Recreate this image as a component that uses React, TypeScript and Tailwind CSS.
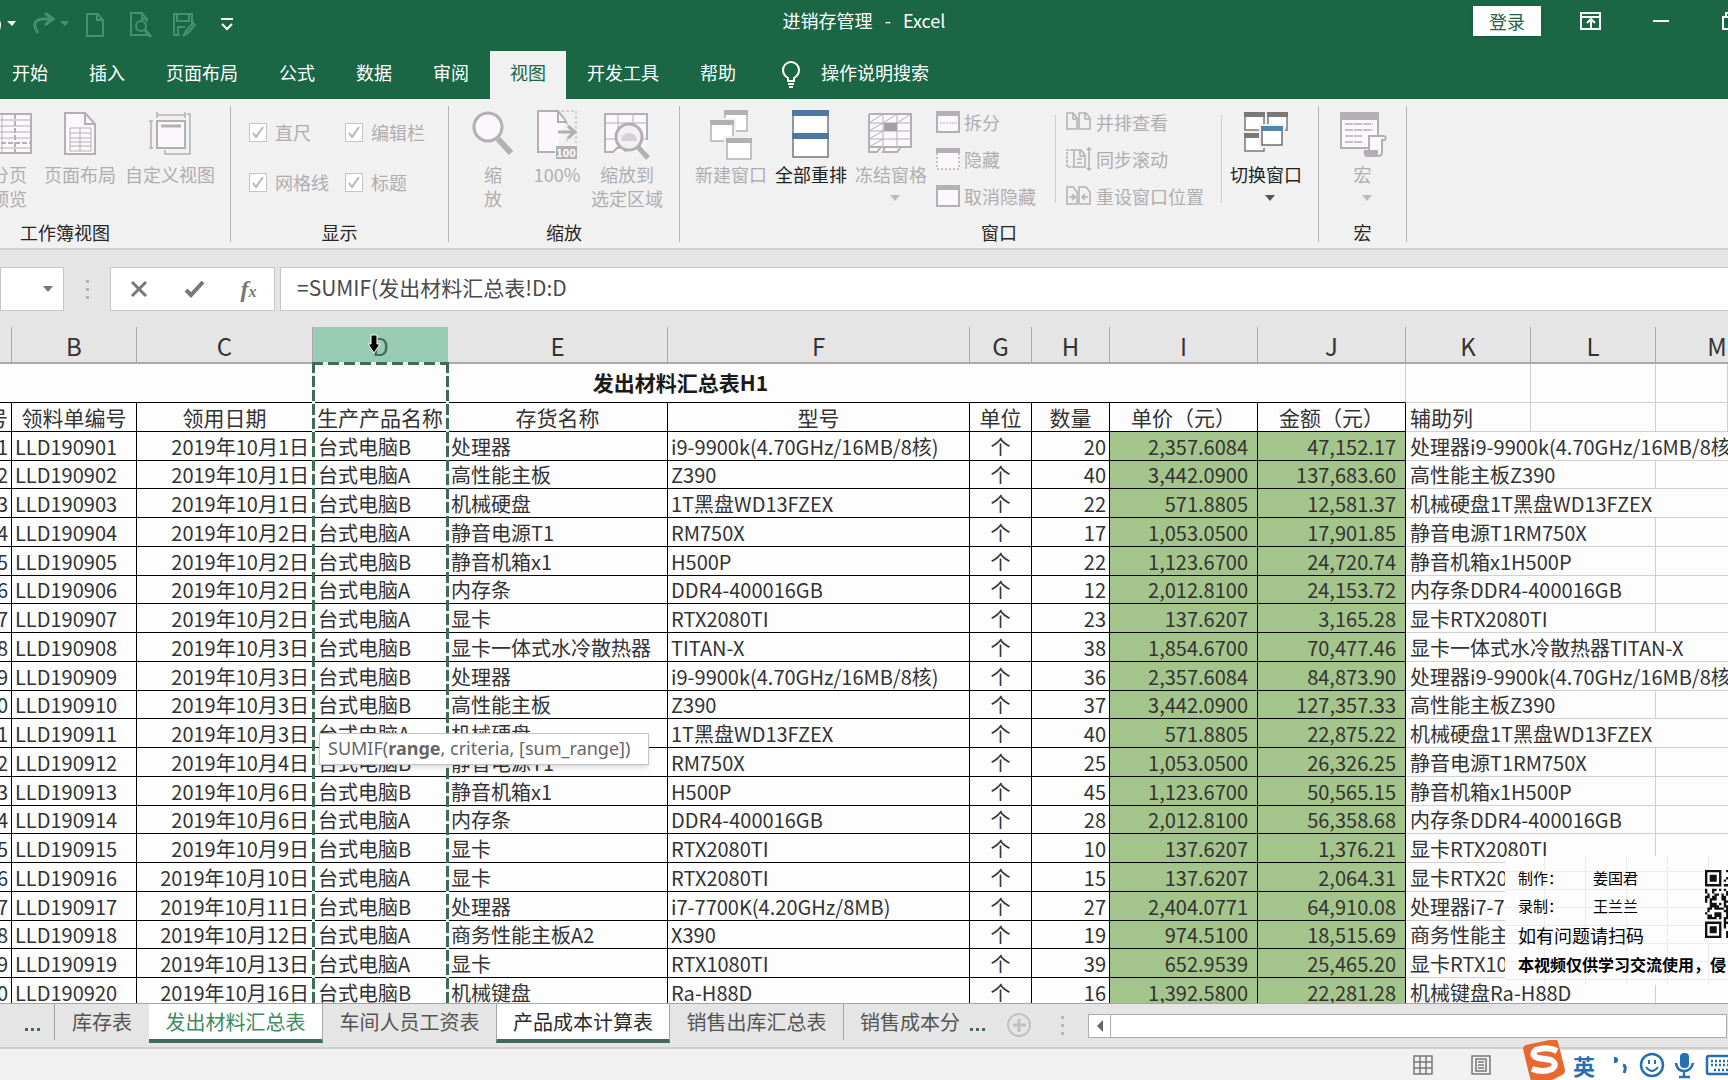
import type { ReactNode } from "react";

const TABS = ["开始", "插入", "页面布局", "公式", "数据", "审阅", "视图", "开发工具", "帮助"];

const COLUMNS = ["A", "B", "C", "D", "E", "F", "G", "H", "I", "J", "K", "L", "M"];

// date, product, item, model, quantity, unit price, amount
const ROWS: [string, string, string, string, string, string, string][] = [
  ["2019年10月1日", "台式电脑B", "处理器", "i9-9900k(4.70GHz/16MB/8核)", "20", "2,357.6084", "47,152.17"],
  ["2019年10月1日", "台式电脑A", "高性能主板", "Z390", "40", "3,442.0900", "137,683.60"],
  ["2019年10月1日", "台式电脑B", "机械硬盘", "1T黑盘WD13FZEX", "22", "571.8805", "12,581.37"],
  ["2019年10月2日", "台式电脑A", "静音电源T1", "RM750X", "17", "1,053.0500", "17,901.85"],
  ["2019年10月2日", "台式电脑B", "静音机箱x1", "H500P", "22", "1,123.6700", "24,720.74"],
  ["2019年10月2日", "台式电脑A", "内存条", "DDR4-400016GB", "12", "2,012.8100", "24,153.72"],
  ["2019年10月2日", "台式电脑A", "显卡", "RTX2080TI", "23", "137.6207", "3,165.28"],
  ["2019年10月3日", "台式电脑B", "显卡一体式水冷散热器", "TITAN-X", "38", "1,854.6700", "70,477.46"],
  ["2019年10月3日", "台式电脑B", "处理器", "i9-9900k(4.70GHz/16MB/8核)", "36", "2,357.6084", "84,873.90"],
  ["2019年10月3日", "台式电脑B", "高性能主板", "Z390", "37", "3,442.0900", "127,357.33"],
  ["2019年10月3日", "台式电脑A", "机械硬盘", "1T黑盘WD13FZEX", "40", "571.8805", "22,875.22"],
  ["2019年10月4日", "台式电脑B", "静音电源T1", "RM750X", "25", "1,053.0500", "26,326.25"],
  ["2019年10月6日", "台式电脑B", "静音机箱x1", "H500P", "45", "1,123.6700", "50,565.15"],
  ["2019年10月6日", "台式电脑A", "内存条", "DDR4-400016GB", "28", "2,012.8100", "56,358.68"],
  ["2019年10月9日", "台式电脑B", "显卡", "RTX2080TI", "10", "137.6207", "1,376.21"],
  ["2019年10月10日", "台式电脑A", "显卡", "RTX2080TI", "15", "137.6207", "2,064.31"],
  ["2019年10月11日", "台式电脑B", "处理器", "i7-7700K(4.20GHz/8MB)", "27", "2,404.0771", "64,910.08"],
  ["2019年10月12日", "台式电脑A", "商务性能主板A2", "X390", "19", "974.5100", "18,515.69"],
  ["2019年10月13日", "台式电脑A", "显卡", "RTX1080TI", "39", "652.9539", "25,465.20"],
  ["2019年10月16日", "台式电脑B", "机械键盘", "Ra-H88D", "16", "1,392.5800", "22,281.28"],
];

const CELL = "border-r border-b border-black px-[3px]";
const SOFT = "border-r border-b border-[#d0d0d0]";

/* ---------- ribbon icons ---------- */

function Svg({ w, h, children, className }: { w: number; h: number; children: ReactNode; className?: string }) {
  return (
    <svg width={w} height={h} viewBox={`0 0 ${w} ${h}`} fill="none" stroke="#b3b0b3" strokeWidth="2" className={className} aria-hidden="true">
      {children}
    </svg>
  );
}

const PageBreakIcon = () => (
  <Svg w={46} h={46}>
    <path d="M1 4h44v39H1z" fill="#fbf7fb" />
    <path d="M1 10h44M1 16h44M1 22h44M1 28h44M1 38h44M16 4v39" strokeWidth="1" />
    <path d="M1 33h44M29 4v39" strokeDasharray="5 2" />
  </Svg>
);

const PageLayoutIcon = () => (
  <Svg w={32} h={46}>
    <path d="M1 3h20l10 11v30H1z" fill="#fbf7fb" />
    <path d="M21 3v11h10" />
    <path d="M6 18h21v23H6zM6 23h21M6 28h21M6 32h21M6 36h21M16 18v23" strokeWidth="1" />
  </Svg>
);

const CustomViewIcon = () => (
  <Svg w={42} h={46}>
    <path d="M8 11h28v27H8z" fill="#fbf7fb" />
    <path d="M12 16h20" strokeWidth="3" />
    <path d="M8 5h28M8 2v6M36 2v6M2 11v27M0 11h4M0 38h4M38 4h3v40H16v-4" strokeWidth="1.5" />
  </Svg>
);

const ZoomIcon = () => (
  <Svg w={42} h={46}>
    <circle cx="16" cy="17" r="14" fill="#fbf7fb" strokeWidth="3" />
    <path d="M26 29l13 14" strokeWidth="6" />
  </Svg>
);

const HundredIcon = () => (
  <Svg w={40} h={50}>
    <path d="M18 42H1V1h20l8 10" fill="#fbf7fb" />
    <path d="M21 1v11h9" />
    <path d="M24 1h15v32M30 12v4M30 28v5" strokeDasharray="3 2" strokeWidth="1" />
    <path d="M21 22h15M31 16l7 6-7 6" strokeWidth="3" />
    <path d="M19 36h21v13H19z" fill="#b3b0b3" stroke="none" />
    <text x="29" y="47" textAnchor="middle" fontSize="11" fontWeight="bold" fill="#fff" stroke="none">100</text>
  </Svg>
);

const ZoomSelectionIcon = () => (
  <Svg w={46} h={50}>
    <path d="M1 4h42v38H1z" fill="#fbf7fb" stroke="none" />
    <path d="M43 30V4H1v38h8l4-4h6l3 4" />
    <path d="M1 13h42M1 29h42M14 4v34M29 4v10" strokeWidth="1" />
    <circle cx="25" cy="27" r="13" fill="#f3f0f3" strokeWidth="3" />
    <path d="M17 31a8 8 0 0 1 16 0z" fill="#d5d2d5" stroke="none" />
    <path d="M34 37l10 11" strokeWidth="5" />
  </Svg>
);

function MiniWindow({ x, y, w = 24, h = 20, head = "#b3b0b3", line = "#b3b0b3" }: { x: number; y: number; w?: number; h?: number; head?: string; line?: string }) {
  return (
    <g>
      <rect x={x - 2} y={y - 2} width={w + 4} height={h + 4} fill="#f1f1f1" stroke="none" />
      <rect x={x + 1} y={y + 1} width={w - 2} height={h - 2} fill="#fff" stroke={line} strokeWidth="1.5" />
      <rect x={x} y={y} width={w} height="5" fill={head} stroke="none" />
    </g>
  );
}

const NewWindowIcon = () => (
  <Svg w={42} h={50}>
    <MiniWindow x={14} y={0} h={22} />
    <MiniWindow x={0} y={10} h={22} />
    <MiniWindow x={16} y={28} w={26} h={22} />
  </Svg>
);

const ArrangeAllIcon = () => (
  <Svg w={38} h={48}>
    <path d="M1 1h35v46H1z" fill="#fff" stroke="#77777a" strokeWidth="1.5" />
    <path d="M0 0h37v6H0zM0 23h37v6H0z" fill="#4f79a2" stroke="none" />
  </Svg>
);

const FreezeIcon = () => (
  <Svg w={46} h={46}>
    <path d="M1 4h42v33H29v5H1z" fill="#fbf7fb" stroke="none" />
    <path d="M1 4h42v33H1M1 4v38h8l4-5M17 37l-2 5h14l4-5" />
    <path d="M1 13h42M1 21h42M1 29h42M15 4v33M29 4v33M1 13l14-9M15 13l14-9M29 13l14-9M1 21l14-8M1 29l14-8M1 37l14-8" strokeWidth="1" />
    <path d="M16 13h13v8H16z" fill="#a3a0a3" stroke="none" />
  </Svg>
);

const SwitchWindowIcon = () => (
  <Svg w={44} h={46}>
    <MiniWindow x={0} y={2} w={21} h={19} head="#7a787a" line="#7a787a" />
    <MiniWindow x={23} y={2} w={21} h={19} head="#7a787a" line="#7a787a" />
    <MiniWindow x={0} y={23} w={21} h={19} head="#7a787a" line="#7a787a" />
    <MiniWindow x={17} y={16} w={22} h={20} head="#4f86ad" line="#6c6c70" />
  </Svg>
);

const MacroIcon = () => (
  <Svg w={48} h={48}>
    <path d="M2 3h37v35H2z" fill="#fbf7fb" />
    <path d="M1 2h39v8H1z" fill="#b3b0b3" stroke="none" />
    <path d="M6 14h28M6 20h28M6 26h18M6 32h18" strokeWidth="1.5" strokeDasharray="8 1" />
    <path d="M30 26h15q3 1 1 4h-3v12q0 4-4 4H28q-3-1-2-5h4z" fill="#fbf7fb" />
    <path d="M26 41h12v5H28q-3-1-2-5z" fill="#b3b0b3" />
  </Svg>
);

const SplitIcon = () => (
  <Svg w={24} h={24}>
    <path d="M1 2h22v20H1z" fill="#fbf7fb" />
    <path d="M0 1h24v5H0z" fill="#b3b0b3" stroke="none" />
    <path d="M4 13h17" strokeDasharray="2 1" strokeWidth="1" />
  </Svg>
);

const HideIcon = () => (
  <Svg w={24} h={24}>
    <path d="M1 6v16h22V6" strokeDasharray="2 2" strokeWidth="1.5" fill="#fbf7fb" />
    <path d="M0 1h24v5H0z" fill="#b3b0b3" stroke="none" />
  </Svg>
);

const UnhideIcon = () => (
  <Svg w={24} h={24}>
    <path d="M1 2h22v20H1z" fill="#fbf7fb" />
    <path d="M0 1h24v5H0z" fill="#b3b0b3" stroke="none" />
  </Svg>
);

const SideBySideIcon = () => (
  <Svg w={26} h={24}>
    <path d="M1 3h6l4 5v11H1zM13 3h7l4 5v11H13z" strokeWidth="1.5" />
    <path d="M7 3v6h4M19 3v6h5" strokeWidth="1.5" />
  </Svg>
);

const SyncScrollIcon = () => (
  <Svg w={26} h={24}>
    <path d="M7 3H1v17h6" strokeDasharray="3 1" strokeWidth="1.5" />
    <path d="M8 3h7l4 5v12H8zM14 3v6h5M11 12h5M11 16h5" strokeWidth="1.5" />
    <path d="M23 1v22M21 3l2-2 2 2M21 21l2 2 2-2" strokeWidth="1.5" />
  </Svg>
);

const ResetPositionIcon = () => (
  <Svg w={26} h={24}>
    <path d="M1 3h6l4 5v12H1zM13 3h7l4 5v12H13z" strokeWidth="1.5" />
    <path d="M3 13h6M6 10l3 3-3 3M22 13h-6M19 10l-3 3 3 3" strokeWidth="1.5" />
  </Svg>
);

const Caret = ({ className = "text-[#b0b0b0]" }: { className?: string }) => (
  <svg width="10" height="6" viewBox="0 0 10 6" fill="currentColor" className={className} aria-hidden="true">
    <path d="M0 0h10L5 6z" />
  </svg>
);

/* ---------- ribbon parts ---------- */

function RibbonGroup({ title, className, titleClass = "", children }: { title: string; className: string; titleClass?: string; children: ReactNode }) {
  return (
    <section className={`flex shrink-0 flex-col justify-between border-r border-[#b5b5b5] ${className}`}>
      <div className="flex items-start">{children}</div>
      <h2 className={`text-center leading-5 text-[#262626] ${titleClass}`}>{title}</h2>
    </section>
  );
}

function BigButton({ icon, lines, className, active, caret }: { icon: ReactNode; lines: string[]; className: string; active?: boolean; caret?: boolean }) {
  return (
    <button className={`flex shrink-0 flex-col items-center whitespace-nowrap pt-1 leading-6 ${active ? "text-[#1f1f1f]" : "text-[#b0adb0]"} ${className}`}>
      <span className="flex h-[52px] items-start justify-center">{icon}</span>
      {lines.map((line) => (
        <span key={line}>{line}</span>
      ))}
      {caret && <Caret className={active ? "mt-[9px] ml-2 text-[#555]" : "mt-[9px] ml-2 text-[#bdbabd]"} />}
    </button>
  );
}

function SmallButton({ icon, label }: { icon: ReactNode; label: string }) {
  return (
    <button className="flex h-8 items-center gap-1 whitespace-nowrap text-[#b0adb0]">
      {icon}
      {label}
    </button>
  );
}

function RibbonCheck({ label }: { label: string }) {
  return (
    <label className="relative flex h-[50px] items-center gap-2 whitespace-nowrap text-[#b0adb0]">
      <input type="checkbox" defaultChecked disabled className="h-[19px] w-[18px] appearance-none border border-[#c4c4c4] bg-white" />
      <svg width="18" height="19" viewBox="0 0 18 19" fill="none" stroke="#b8b8b8" strokeWidth="2" className="absolute left-0" aria-hidden="true">
        <path d="M4 10l3 4 7-10" />
      </svg>
      {label}
    </label>
  );
}

const Divider = () => <div className="mt-[9px] h-[88px] w-px bg-[#cfcfcf]" />;

/* ---------- page sections ---------- */

function TitleBar() {
  return (
    <header className="relative flex h-[42px] shrink-0 items-center justify-between overflow-hidden text-white">
      <div className="flex items-center text-[#45936c]">
        <svg width="240" height="40" viewBox="0 0 240 40" fill="none" stroke="currentColor" strokeWidth="2" aria-label="快速访问工具栏">
          <path d="M-4 18q6 2 3 11" stroke="#fff" />
          <path d="M7 20h9l-4 5z" fill="#fff" stroke="none" />
          <path d="M38 32q-8-12 4-14h9M45 12l8 6-8 6" strokeWidth="3" />
          <path d="M60 20h9l-4 5z" fill="currentColor" stroke="none" />
          <path d="M87 13h11l5 6v16H87zM97 13v6h6" />
          <path d="M148 34h-17V12h11l5 6v3M142 12v6h5" />
          <circle cx="141" cy="25" r="5" />
          <path d="M145 29l6 7" strokeWidth="3" />
          <path d="M192 22v-9h-18v21h6M177 13v7h12v-7M178 34v-8h7" />
          <path d="M183 35l3-5 7-8 2 2-7 8z" />
          <path d="M221 18h12M222 23l5 5 5-5" stroke="#fff" />
        </svg>
      </div>
      <h1 className="absolute inset-x-0 top-[6px] text-center leading-7 whitespace-pre">进销存管理   -   Excel</h1>
      <div className="flex items-center">
        <button className="h-[30px] w-[68px] bg-white leading-7 text-[#1b6644] shadow-sm">登录</button>
        <button aria-label="功能区显示选项" className="ml-[38px]">
          <svg width="24" height="24" viewBox="0 0 24 24" fill="none" stroke="#fff" strokeWidth="2">
            <path d="M2 4h19v16H2zM2 8h19M12 19v-8M8 14l4-4 4 4" />
          </svg>
        </button>
        <button aria-label="最小化" className="ml-[50px] h-6">
          <span className="block h-[2px] w-4 bg-white" />
        </button>
        <button aria-label="还原" className="ml-[53px]">
          <svg width="6" height="24" viewBox="0 0 6 24" fill="none" stroke="#fff" strokeWidth="2">
            <path d="M6 8H1v12h5M4 8V4h2" />
          </svg>
        </button>
      </div>
    </header>
  );
}

function RibbonTabs() {
  return (
    <nav className="flex h-[57px] shrink-0 items-end text-white">
      <div className="-ml-2 flex gap-px">
        {TABS.map((tab) => (
          <button
            key={tab}
            className={
              tab === "视图"
                ? "h-12 bg-[#f1f1f1] px-5 pb-[6px] whitespace-nowrap text-[#1b6644]"
                : "h-12 px-5 pb-[6px] whitespace-nowrap"
            }
          >
            {tab}
          </button>
        ))}
      </div>
      <button className="ml-[25px] flex h-12 items-center gap-[20px] whitespace-nowrap">
        <svg width="20" height="28" viewBox="0 0 20 28" fill="none" stroke="#fff" strokeWidth="2" aria-hidden="true">
          <path d="M7 20v-3q-5-3-5-8a8 8 0 0 1 16 0q0 5-5 8v3zM7 23h6M8 26h4" />
        </svg>
        <span className="pb-[6px]">操作说明搜索</span>
      </button>
    </nav>
  );
}

function Ribbon() {
  return (
    <div className="flex h-[151px] shrink-0 overflow-hidden border-b-2 border-[#d2d2d2] bg-[#f1f1f1] pt-[7px] pb-[6px]">
      <RibbonGroup title="工作簿视图" className="w-[231px]" titleClass="w-[130px]">
        <BigButton icon={<PageBreakIcon />} lines={["分页", "预览"]} className="-ml-[14px] w-[46px]" />
        <BigButton icon={<PageLayoutIcon />} lines={["页面布局"]} className="ml-2 w-20" />
        <BigButton icon={<CustomViewIcon />} lines={["自定义视图"]} className="w-[100px]" />
      </RibbonGroup>
      <RibbonGroup title="显示" className="w-[218px]">
        <div className="grid grid-cols-[96px_auto] pt-px pl-[18px]">
          <RibbonCheck label="直尺" />
          <RibbonCheck label="编辑栏" />
          <RibbonCheck label="网格线" />
          <RibbonCheck label="标题" />
        </div>
      </RibbonGroup>
      <RibbonGroup title="缩放" className="w-[231px]">
        <BigButton icon={<ZoomIcon />} lines={["缩", "放"]} className="ml-3 w-16" />
        <BigButton icon={<HundredIcon />} lines={["100%"]} className="w-16" />
        <BigButton icon={<ZoomSelectionIcon />} lines={["缩放到", "选定区域"]} className="w-[76px]" />
      </RibbonGroup>
      <RibbonGroup title="窗口" className="w-[639px]">
        <BigButton icon={<NewWindowIcon />} lines={["新建窗口"]} className="ml-[11px] w-20" />
        <BigButton icon={<ArrangeAllIcon />} lines={["全部重排"]} className="w-20" active />
        <BigButton icon={<FreezeIcon />} lines={["冻结窗格"]} className="w-20" caret />
        <div className="flex w-[124px] flex-col gap-[5px] pl-[5px]">
          <SmallButton icon={<SplitIcon />} label="拆分" />
          <SmallButton icon={<HideIcon />} label="隐藏" />
          <SmallButton icon={<UnhideIcon />} label="取消隐藏" />
        </div>
        <Divider />
        <div className="flex w-[165px] flex-col gap-[5px] pl-[10px]">
          <SmallButton icon={<SideBySideIcon />} label="并排查看" />
          <SmallButton icon={<SyncScrollIcon />} label="同步滚动" />
          <SmallButton icon={<ResetPositionIcon />} label="重设窗口位置" />
        </div>
        <Divider />
        <BigButton icon={<SwitchWindowIcon />} lines={["切换窗口"]} className="ml-1 w-20" active caret />
      </RibbonGroup>
      <RibbonGroup title="宏" className="w-[88px]">
        <BigButton icon={<MacroIcon />} lines={["宏"]} className="w-full" caret />
      </RibbonGroup>
    </div>
  );
}

function FormulaBar() {
  return (
    <div className="flex h-[77px] shrink-0 pt-[17px] pb-4">
      <button aria-label="名称框" className="flex w-16 items-center justify-end border border-[#c6c6c6] bg-white pr-[10px]">
        <Caret className="text-[#777]" />
      </button>
      <div className="flex w-[46px] flex-col items-center justify-center gap-[5px]">
        <span className="size-[3px] bg-[#b5b5b5]" />
        <span className="size-[3px] bg-[#b5b5b5]" />
        <span className="size-[3px] bg-[#b5b5b5]" />
      </div>
      <div className="flex w-[165px] items-center justify-around border border-[#c6c6c6] bg-white text-[#777]">
        <button aria-label="取消">
          <svg width="20" height="20" viewBox="0 0 20 20" stroke="currentColor" strokeWidth="3">
            <path d="M3 3l14 14M17 3L3 17" />
          </svg>
        </button>
        <button aria-label="输入">
          <svg width="22" height="20" viewBox="0 0 22 20" fill="none" stroke="currentColor" strokeWidth="4">
            <path d="M2 11l5 5L19 3" />
          </svg>
        </button>
        <button aria-label="插入函数" className="font-['Liberation_Serif',serif] text-2xl leading-7 font-bold italic">
          f<span className="text-base">x</span>
        </button>
      </div>
      <input
        aria-label="编辑栏"
        defaultValue="=SUMIF(发出材料汇总表!D:D"
        className="ml-[5px] min-w-0 flex-1 border-y border-l border-[#c6c6c6] bg-white pb-1 pl-4 text-[21px] text-[#4a4a4a] outline-none"
      />
    </div>
  );
}

function Sheet() {
  return (
    <table className="w-full table-fixed border-separate border-spacing-0 whitespace-nowrap text-xl leading-[27px] text-[#333]">
      <colgroup>
        <col className="w-[12px]" />
        <col className="w-[125px]" />
        <col className="w-[176px]" />
        <col className="w-[135px]" />
        <col className="w-[220px]" />
        <col className="w-[302px]" />
        <col className="w-[62px]" />
        <col className="w-[78px]" />
        <col className="w-[148px]" />
        <col className="w-[148px]" />
        <col className="w-[125px]" />
        <col className="w-[125px]" />
        <col />
      </colgroup>
      <thead>
        <tr className="h-[35px] bg-[#e5e5e5] text-2xl">
          {COLUMNS.map((c) => (
            <th
              key={c}
              className={
                c === "D"
                  ? "border-b-2 border-[#9fa3a1] bg-[#97cbb4] pt-[3px] font-normal text-[#3f6b58]"
                  : "border-r border-b-2 border-[#a9a9a9] pt-[3px] font-normal last:border-r-0 last:pl-[50px]"
              }
            >
              {c === "A" ? "" : c}
            </th>
          ))}
        </tr>
      </thead>
      <tbody>
        <tr className="h-[39px]">
          <th colSpan={10} className="border-r border-b border-r-[#d0d0d0] border-b-black pr-[44px] pb-[2px] text-[21px] text-[#1a1a1a]">
            发出材料汇总表H1
          </th>
          <td className={SOFT} />
          <td className={SOFT} />
          <td className={SOFT} />
        </tr>
        <tr className="h-[29px] text-center text-[21px]">
          <td className={CELL}>
            <div className="flex justify-end">号</div>
          </td>
          <td className={CELL}>领料单编号</td>
          <td className={CELL}>领用日期</td>
          <td className={CELL}>生产产品名称</td>
          <td className={CELL}>存货名称</td>
          <td className={CELL}>型号</td>
          <td className={CELL}>单位</td>
          <td className={CELL}>数量</td>
          <td className={CELL}>单价（元）</td>
          <td className={CELL}>金额（元）</td>
          <td className={`${SOFT} pl-1 text-left`}>辅助列</td>
          <td className={SOFT} />
          <td className={SOFT} />
        </tr>
        {ROWS.map(([date, product, item, model, qty, price, amount], i) => (
          <tr key={i} className="h-[29px] [&:nth-child(4n)]:h-[28px] [&:nth-child(4n)]:leading-[26px]">
            <td className={CELL}>
              <div className="flex justify-end">{i + 1}</div>
            </td>
            <td className={CELL}>LLD1909{String(i + 1).padStart(2, "0")}</td>
            <td className={`${CELL} text-right`}>{date}</td>
            <td className={`${CELL} pl-[5px]`}>{product}</td>
            <td className={CELL}>{item}</td>
            <td className={CELL}>{model}</td>
            <td className={`${CELL} text-center`}>个</td>
            <td className={`${CELL} text-right`}>{qty}</td>
            <td className="border-r border-b border-black bg-[#a3c48b] pr-[9px] text-right">{price}</td>
            <td className="border-r border-b border-black bg-[#a3c48b] pr-[9px] text-right">{amount}</td>
            <td className="border-b border-[#d0d0d0] pl-1">{item + model}</td>
            <td className={item.length + model.length > 16 || model.startsWith("1T") ? "border-b border-[#d0d0d0]" : SOFT} />
            <td className="border-b border-[#d0d0d0]" />
          </tr>
        ))}
      </tbody>
    </table>
  );
}

function SheetTabs() {
  return (
    <nav className="flex h-[46px] shrink-0 items-start border-t border-b-2 border-t-[#a5a5a5] border-b-[#cfcfcf] bg-[#e5e5e5] text-xl whitespace-nowrap text-[#555]">
      <button aria-label="更多工作表" className="flex h-9 w-[54px] items-end justify-center gap-[3px] pb-[9px] pl-[10px]">
        <span className="size-[3px] bg-[#3f6b58]" />
        <span className="size-[3px] bg-[#3f6b58]" />
        <span className="size-[3px] bg-[#3f6b58]" />
      </button>
      <button className="h-9 w-[95px] border-l border-[#a5a5a5]">库存表</button>
      <button className="h-[39px] w-[174px] border-r border-b-4 border-r-[#a5a5a5] border-b-[#3f6b58] bg-white text-[#3d8a5c]">发出材料汇总表</button>
      <button className="h-9 w-[173px]">车间人员工资表</button>
      <button className="h-[39px] w-[174px] border-x border-b-4 border-x-[#a5a5a5] border-b-[#3f6b58] bg-white text-[#2b2b2b]">产品成本计算表</button>
      <button className="h-9 w-[174px] border-r border-[#a5a5a5]">销售出库汇总表</button>
      <button className="h-9 pl-4">销售成本分</button>
      <button aria-label="更多工作表" className="ml-[10px] flex h-9 items-end gap-[3px] pb-[9px]">
        <span className="size-[3px] bg-[#3f6b58]" />
        <span className="size-[3px] bg-[#3f6b58]" />
        <span className="size-[3px] bg-[#3f6b58]" />
      </button>
      <button aria-label="新工作表" className="mt-[9px] ml-[22px]">
        <svg width="25" height="25" viewBox="0 0 25 25" fill="none" stroke="#c2c2c2" strokeWidth="2">
          <circle cx="12" cy="12" r="11" />
          <path d="M12 6v13M6 12h13" strokeWidth="3" />
        </svg>
      </button>
      <div className="mt-3 ml-[29px] flex flex-col gap-[5px]">
        <span className="size-[3px] bg-[#b5b5b5]" />
        <span className="size-[3px] bg-[#b5b5b5]" />
        <span className="size-[3px] bg-[#b5b5b5]" />
      </div>
      <div className="mt-[10px] mr-px ml-6 flex h-6 flex-1 border border-[#ababab] bg-white">
        <button aria-label="向左滚动" className="flex w-[22px] items-center justify-center border-r border-[#ababab]">
          <svg width="6" height="12" viewBox="0 0 6 12" fill="#666">
            <path d="M6 0v12L0 6z" />
          </svg>
        </button>
      </div>
    </nav>
  );
}

function StatusBar() {
  return (
    <footer className="flex h-[31px] shrink-0 items-start justify-end bg-[#f1f1f1]">
      <button aria-label="普通" className="mt-[6px]">
        <svg width="20" height="20" viewBox="0 0 20 20" fill="none" stroke="#777" strokeWidth="1.5">
          <path d="M1 1h18v18H1zM7 1v18M13 1v18M1 7h18M1 13h18" />
        </svg>
      </button>
      <button aria-label="页面布局" className="mt-[6px] ml-[38px]">
        <svg width="20" height="20" viewBox="0 0 20 20" fill="none" stroke="#777" strokeWidth="1.5">
          <path d="M1 1h18v18H1zM5 4h10v12H5zM7 7h6M7 10h6M7 13h6" />
        </svg>
      </button>
      <div className="relative ml-[68px] flex h-[31px] w-[169px] items-center border-t border-[#ddd] bg-white pl-[14px] text-[#2470b0]">
        <svg width="46" height="40" viewBox="0 0 46 40" className="absolute bottom-0 -left-9" aria-label="搜狗输入法">
          <path d="M0 9Q0 6 3 5L31 -1q3 0 4 3l7 28q0 4-3 5l-12 6H11q-3 0-4-3z" fill="#e8692f" />
          <path d="M34 11q-10-5-21-1-6 5 2 8l13 2q7 4 1 9-9 4-20 0" fill="none" stroke="#fff" strokeWidth="6" />
        </svg>
        <span className="text-[22px] font-bold">英</span>
        <svg width="114" height="30" viewBox="0 0 114 30" fill="none" stroke="currentColor" strokeWidth="2" className="absolute right-0 bottom-0" aria-label="输入法工具">
          <circle cx="1" cy="10" r="3" fill="currentColor" stroke="none" />
          <path d="M9 15q4 1 1 8" strokeWidth="3" />
          <circle cx="38" cy="15" r="11" strokeWidth="2.5" />
          <path d="M32 17q6 8 12 0M35 10v4M41 10v4" />
          <rect x="66" y="3" width="9" height="15" rx="4" fill="currentColor" stroke="none" />
          <path d="M62 13q1 8 8 8t9-8M70 21v6M65 27h11" strokeWidth="2.5" />
          <rect x="93" y="6" width="26" height="18" rx="2" strokeWidth="2.5" />
          <path d="M97 11h17M97 15h17M100 20h14" strokeWidth="2.5" strokeDasharray="2 2" />
        </svg>
      </div>
    </footer>
  );
}

const QR_SIZE = 29;

function isFinder(x: number, y: number) {
  return x < 8 && (y < 8 || y > 20);
}

function QrCode() {
  const cells: string[] = [];
  let seed = 11;
  for (let y = 0; y < QR_SIZE; y++) {
    for (let x = 0; x < QR_SIZE; x++) {
      seed = (seed * 1103515245 + 12345) % 2147483648;
      if (!isFinder(x, y) && seed / 2147483648 > 0.48) cells.push(`M${x} ${y}h1v1h-1z`);
    }
  }
  return (
    <svg width="68" height="68" viewBox={`0 0 ${QR_SIZE} ${QR_SIZE}`} className="absolute top-[14px] left-[200px]" aria-label="二维码">
      <path d={`M0 0h${QR_SIZE}v${QR_SIZE}H0z`} fill="#fff" />
      <path d={cells.join("")} fill="#111" />
      <path d="M.5 .5h6v6h-6zM.5 22.5h6v6h-6z" fill="none" stroke="#111" />
      <path d="M2 2h3v3H2zM2 24h3v3H2z" fill="#111" />
    </svg>
  );
}

function Credits() {
  return (
    <aside className="absolute right-0 bottom-[18px] h-[129px] w-[223px] overflow-hidden bg-[#fdfdfd] bg-[linear-gradient(to_right,#ececec_1px,transparent_1px),linear-gradient(to_bottom,#ececec_1px,transparent_1px)] bg-[size:41px_18px] bg-[position:39px_15px] pt-2 pl-[13px] whitespace-nowrap text-black">
      <p className="flex h-7 gap-[30px] text-[15px] leading-7">
        <span>制作：</span>
        <span>姜国君</span>
      </p>
      <p className="flex h-7 gap-[30px] text-[15px] leading-7">
        <span>录制：</span>
        <span>王兰兰</span>
      </p>
      <p className="leading-[30px]">如有问题请扫码</p>
      <p className="text-base leading-7 font-bold">本视频仅供学习交流使用，侵</p>
      <QrCode />
    </aside>
  );
}

export default function App() {
  return (
    <div className="flex h-screen flex-col overflow-hidden bg-[#e5e5e5] font-['Noto_Sans_CJK_SC',sans-serif] text-lg">
      <div className="shrink-0 bg-[#1b6644]">
        <TitleBar />
        <RibbonTabs />
      </div>
      <Ribbon />
      <FormulaBar />
      <main className="relative min-h-0 flex-1 overflow-hidden bg-[#fdfdfd]">
        <Sheet />
        {/* marching ants around column D */}
        <div className="pointer-events-none absolute top-[35px] bottom-0 left-[312px] w-[137px] bg-[repeating-linear-gradient(to_bottom,#3f6b58_0_11px,#e9f6ef_11px_14px),repeating-linear-gradient(to_bottom,#3f6b58_0_11px,#e9f6ef_11px_14px),repeating-linear-gradient(to_right,#3f6b58_0_11px,#e9f6ef_11px_16px)] bg-[size:3px_100%,3px_100%,100%_3px] bg-[position:left_top,right_top,left_top] bg-no-repeat" />
        <svg width="14" height="20" viewBox="0 0 14 20" className="absolute top-[7px] left-[367px]" aria-hidden="true">
          <path d="M4 1h6v9h3l-6 9-6-9h3z" fill="#000" stroke="#fff" strokeWidth="1" />
        </svg>
        <div role="tooltip" className="absolute top-[406px] left-[319px] h-8 w-[330px] border border-[#c4c4c4] bg-white px-2 font-['Noto_Sans',sans-serif] leading-7 whitespace-nowrap text-[#666] shadow-md">
          SUMIF(<b>range</b>, criteria, [sum_range])
        </div>
        <Credits />
      </main>
      <SheetTabs />
      <StatusBar />
    </div>
  );
}
